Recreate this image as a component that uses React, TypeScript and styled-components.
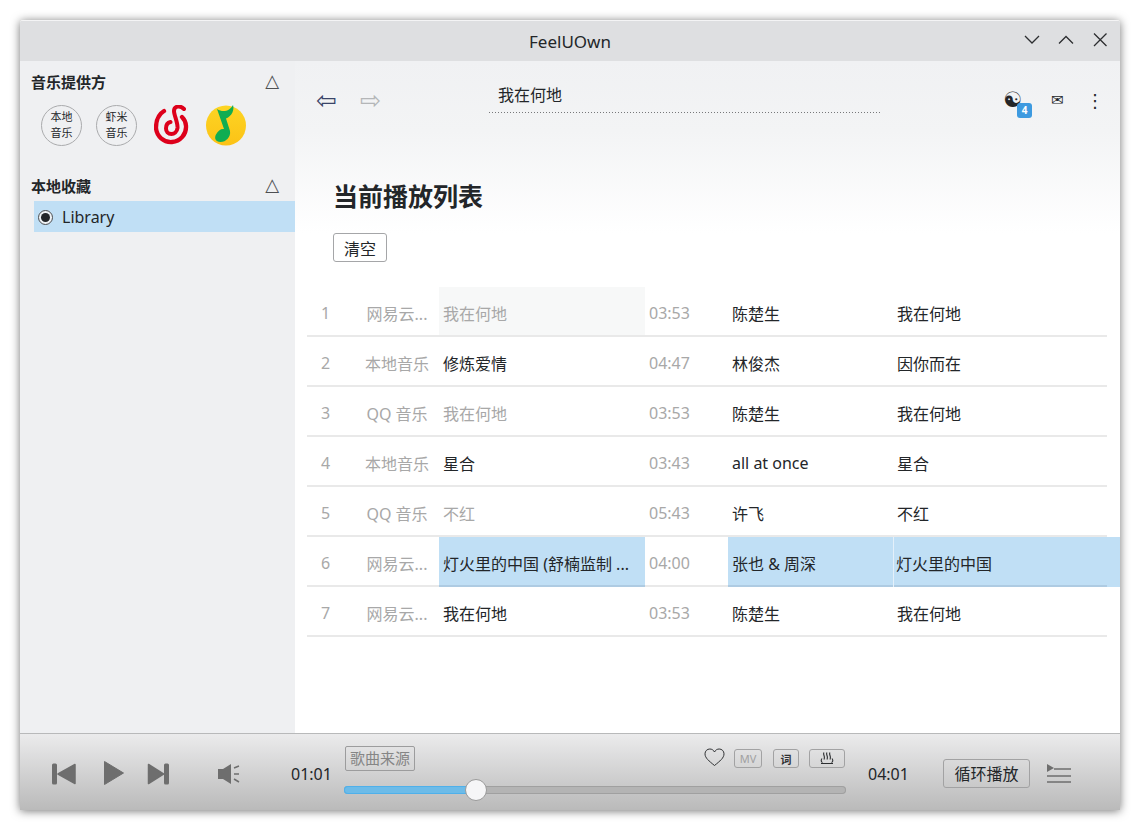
import styled, { createGlobalStyle } from "styled-components";

const FONT = `"Noto Sans", "Noto Sans CJK SC", "DejaVu Sans", sans-serif`;

const GlobalStyle = createGlobalStyle`
  html, body {
    margin: 0;
    padding: 0;
    background: #fff;
  }
  body {
    font-family: ${FONT};
    color: #232629;
  }
`;

const Page = styled.div`
  width: 1140px;
  height: 831px;
  padding: 20px 20px 21px;
  box-sizing: border-box;
`;

const Window = styled.div`
  width: 1100px;
  height: 790px;
  display: flex;
  flex-direction: column;
  border-radius: 3px 3px 0 0;
  box-shadow: 0 1px 10px rgba(0, 0, 0, 0.55);
  overflow: hidden;
  background: #fff;
`;

const TitleBar = styled.div`
  height: 41px;
  flex: none;
  background: #dedfe1;
  border-top: 1px solid #f4f4f5;
  box-sizing: border-box;
  display: flex;
  align-items: center;
  justify-content: center;
  position: relative;
  font-size: 17px;
  color: #232629;
`;

const WindowControls = styled.div`
  position: absolute;
  right: 12px;
  top: 11px;
  display: flex;
  gap: 18px;
`;

const Body = styled.div`
  flex: 1;
  min-height: 0;
  display: flex;
`;

const Sidebar = styled.aside`
  width: 275px;
  flex: none;
  background: #eff0f2;
  padding: 10px 0 0 11px;
  box-sizing: border-box;
`;

const SectionHead = styled.div`
  display: flex;
  justify-content: space-between;
  align-items: center;
  height: 20px;
  padding-right: 16px;
  font-size: 15px;
  font-weight: 700;
  color: #232629;
`;

const Triangle = styled.span`
  font-family: "DejaVu Sans", sans-serif;
  font-weight: 400;
  font-size: 18px;
  color: #4d4f52;
  line-height: 20px;
`;

const Providers = styled.div`
  display: flex;
  align-items: center;
  gap: 14px;
  margin: 13px 0 29px 10px;
  height: 42px;
`;

const TextProvider = styled.div`
  width: 41px;
  height: 41px;
  border: 1px solid #aaabad;
  border-radius: 50%;
  box-sizing: border-box;
  display: flex;
  align-items: center;
  justify-content: center;
  text-align: center;
  font-size: 11px;
  line-height: 16px;
  color: #232629;
`;

const NeteaseMark = styled.svg`
  margin: 0 3px;
`;

const LibraryRow = styled.div`
  height: 31px;
  margin: 6px 0 0 3px;
  background: #c0dff5;
  display: flex;
  align-items: center;
  gap: 9px;
  padding: 1px 0 0 4px;
  box-sizing: border-box;
  font-size: 16px;
  color: #232629;
`;

const Radio = styled.span`
  width: 15px;
  height: 15px;
  border: 1px solid #4a4c4f;
  border-radius: 50%;
  box-sizing: border-box;
  display: flex;
  align-items: center;
  justify-content: center;
  background: #eef2f5;

  &::after {
    content: "";
    width: 9px;
    height: 9px;
    border-radius: 50%;
    background: #232629;
  }
`;

const Main = styled.main`
  flex: 1;
  min-width: 0;
  background: linear-gradient(#f0f1f3 0, #f3f4f5 70px, #ffffff 172px);
  padding-left: 12px;
`;

const TopBar = styled.div`
  height: 52px;
  padding-top: 9px;
  position: relative;
  display: flex;
`;

const NavArrow = styled.span<{ $off?: boolean }>`
  position: absolute;
  top: 25px;
  left: ${(p) => (p.$off ? "53px" : "9px")};
  font-family: "DejaVu Sans", sans-serif;
  font-size: 25px;
  line-height: 30px;
  color: ${(p) => (p.$off ? "#b4b6b8" : "#3a4468")};
`;

const SearchBox = styled.div`
  width: 392px;
  height: 43px;
  margin-left: 182px;
  box-sizing: border-box;
  background: repeating-linear-gradient(90deg, #77787a 0 1px, transparent 1px 3px) left bottom / 100% 1px no-repeat;
  padding: 13px 0 0 9px;
  font-size: 16px;
  line-height: 24px;
  color: #232629;
`;

const TopIcons = styled.div`
  position: absolute;
  top: 0;
  right: 0;
  width: 120px;
  height: 60px;
`;

const Glyph = styled.span<{ $left: number; $top: number; $size: number }>`
  position: absolute;
  left: ${(p) => p.$left}px;
  top: ${(p) => p.$top}px;
  font-family: "DejaVu Sans", sans-serif;
  font-size: ${(p) => p.$size}px;
  line-height: 1;
  color: #232629;
`;

const Badge = styled.span`
  position: absolute;
  left: 17px;
  top: 42px;
  width: 15px;
  height: 15px;
  border-radius: 3px;
  background: #3d9ae0;
  color: #fff;
  font-size: 10px;
  font-weight: 700;
  line-height: 15px;
  text-align: center;
`;

const Heading = styled.h1`
  margin: 56px 0 0 26px;
  height: 36px;
  font-size: 25px;
  line-height: 36px;
  font-weight: 700;
  color: #232629;
`;

const ClearButton = styled.button`
  display: block;
  margin: 19px 0 0 26px;
  width: 54px;
  height: 29px;
  padding: 0;
  background: #fff;
  border: 1px solid #a5a6a8;
  border-radius: 3px;
  font: inherit;
  font-size: 16px;
  color: #232629;
`;

const SongTable = styled.div`
  margin-top: 25px;
  width: 800px;
`;

const Row = styled.div`
  display: grid;
  grid-template-columns: 132px 206px 83px 165px 214px;
  height: 50px;
`;

const Cell = styled.div<{ $selected?: boolean; $hover?: boolean }>`
  display: flex;
  align-items: center;
  box-sizing: border-box;
  height: 50px;
  padding: 4px 0 0 4px;
  font-size: 16px;
  white-space: nowrap;
  overflow: hidden;
  color: #232629;
  border-bottom: 2px solid ${(p) => (p.$selected ? "#aecbe2" : "#e9e9e9")};
  background: ${(p) => (p.$selected ? "#c0dff5" : p.$hover ? "#f7f8f8" : "transparent")};
`;

// the selected album cell runs on to the window edge, its rule does not
const SpillCell = styled(Cell)`
  margin-right: -13px;
  padding: 4px 0 2px 2px;
  border-left: 1px solid #e4f0fa;
  border-bottom: none;
  background: linear-gradient(#aecbe2, #aecbe2) left bottom / 213px 2px no-repeat, #c0dff5;
`;

const MetaCell = styled(Cell)`
  display: grid;
  grid-template-columns: 44px 64px;
  padding: 4px 0 0 14px;
  color: #a8a8a8;
`;

const Muted = styled.span<{ $dim?: boolean }>`
  color: ${(p) => (p.$dim ? "#a8a8a8" : "inherit")};
`;

const Duration = styled(Cell)`
  color: #a8a8a8;
`;

const Source = styled.span`
  text-align: center;
`;

const Player = styled.footer`
  height: 77px;
  flex: none;
  box-sizing: border-box;
  border-top: 1px solid #b8b9ba;
  background: linear-gradient(#ebebec, #bababa);
  position: relative;
`;

const Control = styled.div<{ $left: number; $top: number }>`
  position: absolute;
  left: ${(p) => p.$left}px;
  top: ${(p) => p.$top}px;
  display: flex;
`;

const Time = styled.span`
  font-size: 16px;
  line-height: 20px;
  color: #232629;
`;

const SourceTag = styled.span`
  display: block;
  box-sizing: border-box;
  width: 70px;
  height: 25px;
  border: 1px solid #9c9c9d;
  border-radius: 2px;
  font-size: 15px;
  line-height: 23px;
  text-align: center;
  color: #858585;
`;

const Track = styled.div`
  width: 502px;
  height: 8px;
  border-radius: 4px;
  background: #b4b4b4;
  box-shadow: inset 0 0 0 1px #a0a0a0;
  position: relative;
`;

const TrackFill = styled.div`
  height: 8px;
  border-radius: 4px 0 0 4px;
  background: #6dbbe8;
  box-shadow: inset 0 0 0 1px #4fb0ea;
`;

const Thumb = styled.div`
  position: absolute;
  top: -7px;
  width: 22px;
  height: 22px;
  margin-left: -11px;
  box-sizing: border-box;
  border-radius: 50%;
  border: 1px solid #9a9a9a;
  background: #f6f6f7;
`;

const SmallButton = styled.span<{ $w: number; $dim?: boolean }>`
  display: flex;
  align-items: center;
  justify-content: center;
  box-sizing: border-box;
  width: ${(p) => p.$w}px;
  height: 19px;
  border: 1px solid #a2a2a3;
  border-radius: 3px;
  font-size: 11px;
  font-weight: ${(p) => (p.$dim ? 400 : 700)};
  color: ${(p) => (p.$dim ? "#a0a0a1" : "#303234")};
`;

const ModeButton = styled.span`
  display: block;
  box-sizing: border-box;
  width: 87px;
  height: 29px;
  border: 1px solid #a2a2a3;
  border-radius: 3px;
  font-size: 16px;
  line-height: 29px;
  text-align: center;
  color: #232629;
`;

type Song = {
  source: string;
  title: string;
  time: string;
  artist: string;
  album: string;
  dim?: boolean;
};

const songs: Song[] = [
  { source: "网易云...", title: "我在何地", time: "03:53", artist: "陈楚生", album: "我在何地", dim: true },
  { source: "本地音乐", title: "修炼爱情", time: "04:47", artist: "林俊杰", album: "因你而在" },
  { source: "QQ 音乐", title: "我在何地", time: "03:53", artist: "陈楚生", album: "我在何地", dim: true },
  { source: "本地音乐", title: "星合", time: "03:43", artist: "all at once", album: "星合" },
  { source: "QQ 音乐", title: "不红", time: "05:43", artist: "许飞", album: "不红", dim: true },
  { source: "网易云...", title: "灯火里的中国 (舒楠监制 ...", time: "04:00", artist: "张也 & 周深", album: "灯火里的中国" },
  { source: "网易云...", title: "我在何地", time: "03:53", artist: "陈楚生", album: "我在何地" },
];

const SELECTED_ROW = 5;

const NeteaseLogo = () => (
  <NeteaseMark width="35" height="40" viewBox="0 0 35 40">
    <path
      d="M10 6C5 9 2 15 2 23A15 15 0 1 0 32 21C32 17 30 14 28 12"
      fill="none"
      stroke="#dd001b"
      strokeWidth="4.300"
      strokeLinecap="round"
    />
    <path
      d="M30 4C26 0 20 1 20 6C20 10 24 18 23.500 23C23 27 20 29 17.500 29C14 29 12 26.500 12 23.500C12 19.500 14 17.500 16.500 17"
      fill="none"
      stroke="#dd001b"
      strokeWidth="4"
      strokeLinecap="round"
    />
  </NeteaseMark>
);

const QQLogo = () => (
  <svg width="41" height="42" viewBox="0 0 41 42">
    <defs>
      <linearGradient id="qqYellow" x1="0" y1="0" x2="0" y2="1">
        <stop offset="0" stopColor="#fdd524" />
        <stop offset="1" stopColor="#fcc216" />
      </linearGradient>
    </defs>
    <circle cx="20" cy="21.500" r="20" fill="url(#qqYellow)" />
    <path
      d="M11 5C17 9 24 7 27 1C28.500 6 26 12 20 14.500L24 27C25 33 20 38 14.500 38C9.500 38 8 34 10 30.500C12 26.500 15 24.500 18 25Z"
      fill="#10ad52"
    />
  </svg>
);

const Chevron = ({ d }: { d: string }) => (
  <svg width="16" height="16" viewBox="0 0 16 16">
    <path d={d} fill="none" stroke="#2c2e30" strokeWidth="1.300" />
  </svg>
);

const App = () => {
  return (
    <>
      <GlobalStyle />
      <Page>
        <Window>
          <TitleBar>
            FeelUOwn
            <WindowControls>
              <Chevron d="M1 4l7 7 7-7" />
              <Chevron d="M1 11.500l7-7 7 7" />
              <Chevron d="M2 1.500l12.500 12.500M14.500 1.500L2 14" />
            </WindowControls>
          </TitleBar>
          <Body>
            <Sidebar>
              <SectionHead>
                音乐提供方
                <Triangle>△</Triangle>
              </SectionHead>
              <Providers>
                <TextProvider>
                  本地
                  <br />
                  音乐
                </TextProvider>
                <TextProvider>
                  虾米
                  <br />
                  音乐
                </TextProvider>
                <NeteaseLogo />
                <QQLogo />
              </Providers>
              <SectionHead>
                本地收藏
                <Triangle>△</Triangle>
              </SectionHead>
              <LibraryRow>
                <Radio />
                Library
              </LibraryRow>
            </Sidebar>
            <Main>
              <TopBar>
                <NavArrow>⇦</NavArrow>
                <NavArrow $off>⇨</NavArrow>
                <SearchBox>我在何地</SearchBox>
                <TopIcons>
                  <Glyph $left={3} $top={29} $size={21}>
                    ☯
                  </Glyph>
                  <Badge>4</Badge>
                  <Glyph $left={51} $top={32} $size={15}>
                    ✉
                  </Glyph>
                  <Glyph $left={86} $top={31} $size={18}>
                    ⋮
                  </Glyph>
                </TopIcons>
              </TopBar>
              <Heading>当前播放列表</Heading>
              <ClearButton>清空</ClearButton>
              <SongTable>
                {songs.map((song, i) => {
                  const selected = i === SELECTED_ROW;
                  return (
                    <Row key={i}>
                      <MetaCell>
                        <span>{i + 1}</span>
                        <Source>{song.source}</Source>
                      </MetaCell>
                      <Cell $selected={selected} $hover={i === 0}>
                        <Muted $dim={song.dim}>{song.title}</Muted>
                      </Cell>
                      <Duration>{song.time}</Duration>
                      <Cell $selected={selected}>{song.artist}</Cell>
                      {selected ? <SpillCell>{song.album}</SpillCell> : <Cell>{song.album}</Cell>}
                    </Row>
                  );
                })}
              </SongTable>
            </Main>
          </Body>
          <Player>
            <Control $left={31} $top={28}>
              <svg width="26" height="24" viewBox="0 0 26 24">
                <rect x="1" y="1.500" width="5" height="21" rx="1.500" fill="#6e6e6e" />
                <path d="M7 12l17-9.500v19z" fill="#6e6e6e" stroke="#6e6e6e" strokeWidth="1.500" strokeLinejoin="round" />
              </svg>
            </Control>
            <Control $left={83} $top={26}>
              <svg width="22" height="26" viewBox="0 0 22 26">
                <path d="M1.500 1.500v23l19-11.500z" fill="#6e6e6e" stroke="#6e6e6e" strokeWidth="1" strokeLinejoin="round" />
              </svg>
            </Control>
            <Control $left={127} $top={28}>
              <svg width="24" height="24" viewBox="0 0 24 24">
                <path d="M1.500 2.500l15 9.500-15 9.500z" fill="#6e6e6e" stroke="#6e6e6e" strokeWidth="1.500" strokeLinejoin="round" />
                <rect x="17" y="1.500" width="5" height="21" rx="1.500" fill="#6e6e6e" />
              </svg>
            </Control>
            <Control $left={197} $top={29}>
              <svg width="24" height="22" viewBox="0 0 24 22">
                <path d="M1 6h5l8-5v20l-8-5H1z" fill="#6e6e6e" />
                <path d="M17 5l5-2M17 11h5M17 16l5 3" stroke="#6e6e6e" strokeWidth="1.500" />
              </svg>
            </Control>
            <Control $left={271} $top={30}>
              <Time>01:01</Time>
            </Control>
            <Control $left={325} $top={12}>
              <SourceTag>歌曲来源</SourceTag>
            </Control>
            <Control $left={324} $top={52}>
              <Track>
                <TrackFill style={{ width: `${(132 / 502) * 100}%` }} />
                <Thumb style={{ left: `${(132 / 502) * 100}%` }} />
              </Track>
            </Control>
            <Control $left={684} $top={14}>
              <svg width="21" height="19" viewBox="0 0 21 19">
                <path
                  d="M10.500 17.500C5 13 1 10 1 5.800 1 3 3.200 1 5.800 1c2 0 3.700 1 4.700 3 1-2 2.700-3 4.700-3C17.800 1 20 3 20 5.800c0 4.200-4 7.200-9.500 11.700z"
                  fill="none"
                  stroke="#2f3133"
                  strokeWidth="1"
                />
              </svg>
            </Control>
            <Control $left={714} $top={15}>
              <SmallButton $w={28} $dim>
                MV
              </SmallButton>
            </Control>
            <Control $left={753} $top={15}>
              <SmallButton $w={26}>词</SmallButton>
            </Control>
            <Control $left={789} $top={15}>
              <SmallButton $w={36}>
                <svg width="14" height="13" viewBox="0 0 14 13">
                  <path
                    d="M4 .5C2.500 2.500 5.500 4 4 7.500M7 .5C5.500 2.500 8.500 4 7 7.500M10 .5C8.500 2.500 11.500 4 10 7.500M2 6.500C.5 8.500 1.500 10 2.500 10.500M12 6.500C13.500 8.500 12.500 10 11.500 10.500M1 11.500H13"
                    fill="none"
                    stroke="#2c2e30"
                    strokeWidth="1.100"
                  />
                </svg>
              </SmallButton>
            </Control>
            <Control $left={848} $top={30}>
              <Time>04:01</Time>
            </Control>
            <Control $left={923} $top={25}>
              <ModeButton>循环播放</ModeButton>
            </Control>
            <Control $left={1026} $top={29}>
              <svg width="26" height="21" viewBox="0 0 26 21">
                <path d="M1 1l7 4-7 4z" fill="#6e6e6e" />
                <path d="M8 6h17M1 13h24M1 19h24" stroke="#6e6e6e" strokeWidth="1.500" />
              </svg>
            </Control>
          </Player>
        </Window>
      </Page>
    </>
  );
};

export default App;
